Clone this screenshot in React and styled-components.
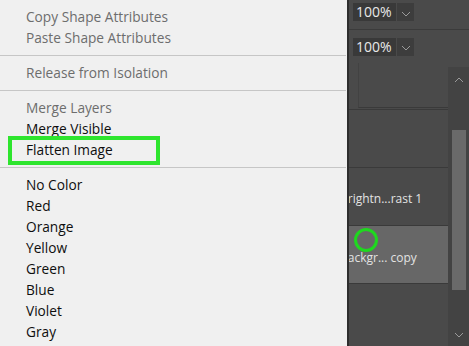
import React from "react";
import styled, { createGlobalStyle } from "styled-components";

const Global = createGlobalStyle`
  html, body { margin: 0; padding: 0; background: #4a4a4a; }
  body { font-family: "Open Sans", "Noto Sans", sans-serif; }
`;

const Screen = styled.div`
  position: relative;
  width: 469px;
  height: 346px;
  overflow: hidden;
  background: #4a4a4a;
`;

/* ---------- dark layers panel ---------- */
const Panel = styled.div`
  display: flex;
  flex-direction: column;
  height: 100%;
  font-family: "Open Sans", "Noto Sans", sans-serif;
  color: #e6e6e6;
`;

const OptionRow = styled.div`
  display: flex;
  height: ${(p) => p.$h}px;
  padding-top: ${(p) => p.$pt || 0}px;
  box-sizing: border-box;
  border-bottom: ${(p) => (p.$line ? "1px solid #3b3b3b" : "none")};
  align-items: ${(p) => (p.$pt ? "flex-start" : "center")};
`;

const OptLabel = styled.span`
  flex: 0 0 353px;
  text-align: right;
  padding-right: 8px;
  box-sizing: border-box;
  font-size: 12px;
`;

const ValueBox = styled.div`
  width: 43px;
  height: 18px;
  background: #393939;
  font-size: 14px;
  line-height: 18px;
  padding-left: 3px;
  box-sizing: border-box;
  color: #e8e8e8;
`;

const DropBtn = styled.div`
  width: 17px;
  height: 18px;
  margin-left: 1px;
  background: #3d3d3d;
  display: flex;
  align-items: center;
  justify-content: center;
  padding-top: 3px;
  box-sizing: border-box;
`;

const LayerArea = styled.div`
  flex: 1;
  display: flex;
  min-height: 0;
`;

const LayerList = styled.div`
  flex: 1;
  display: flex;
  flex-direction: column;
`;

const TopGap = styled.div`
  height: 45px;
  border-bottom: 1px solid #3a3a3a;
  box-sizing: border-box;
  margin-bottom: 1px;
  margin-left: 358px;
  border-left: 1px solid #424242;
`;

const LayerRow = styled.div`
  height: ${(p) => p.$h || 58}px;
  box-sizing: border-box;
  border-top: 1px solid #3a3a3a;
  background: ${(p) => (p.$selected ? "#676767" : "#4a4a4a")};
  display: flex;
  align-items: center;
  padding-left: 340px;
  padding-top: ${(p) => p.$shift || 0}px;
  font-size: 12px;
  color: #e2e2e2;
  white-space: nowrap;
`;

const Scrollbar = styled.div`
  width: 21px;
  margin-top: 4px;
  background: #434343;
  display: flex;
  flex-direction: column;
  align-items: center;
  justify-content: space-between;
  padding: 10px 0 8px;
  box-sizing: border-box;
`;

const Thumb = styled.div`
  width: 14px;
  height: 160px;
  background: #6a6a6a;
  margin-left: 1px;
`;

const ScrollTrack = styled.div`
  flex: 1;
  display: flex;
  flex-direction: column;
  align-items: center;
  padding-top: 47px;
`;

const Chevron = ({ up }) => (
  <svg width="10" height="6" viewBox="0 0 10 6">
    <path
      d={up ? "M1 5 L5 1 L9 5" : "M1 1 L5 5 L9 1"}
      fill="none"
      stroke="#9a9a9a"
      strokeWidth="1"
    />
  </svg>
);

/* ---------- light context menu ---------- */
const Menu = styled.div`
  position: absolute;
  left: 0;
  top: 0;
  width: 347px;
  height: 346px;
  background: #f0f0f0;
  border-right: 2px solid #2e2e2e;
  padding-top: 6px;
  box-sizing: content-box;
  font-family: "Open Sans", "Noto Sans", sans-serif;
`;

const Item = styled.div`
  position: relative;
  height: 21px;
  line-height: 21px;
  padding-left: 26px;
  font-size: 13.7px;
  color: ${(p) => (p.$disabled ? "#6d6d6d" : "#0e0e0e")};
  white-space: nowrap;

  ${(p) =>
    p.$highlight &&
    `
    &::after {
      content: "";
      position: absolute;
      left: 8px;
      top: -3px;
      width: 152px;
      height: 29px;
      box-sizing: border-box;
      border: 4px solid #2ee52e;
    }
  `}
`;

const Separator = styled.div`
  height: 14px;
  display: flex;
  align-items: center;
  &::before {
    content: "";
    display: block;
    width: 346px;
    height: 1px;
    background: #c6c6c6;
  }
`;

const Marker = styled.div`
  position: absolute;
  left: 354px;
  top: 228px;
  width: 24px;
  height: 24px;
  border-radius: 50%;
  border: 3px solid #1fd81f;
  box-sizing: border-box;
`;

const menu = [
  { t: "Copy Shape Attributes", d: true },
  { t: "Paste Shape Attributes", d: true },
  "sep",
  { t: "Release from Isolation", d: true },
  "sep",
  { t: "Merge Layers", d: true },
  { t: "Merge Visible" },
  { t: "Flatten Image", h: true },
  "sep",
  { t: "No Color" },
  { t: "Red" },
  { t: "Orange" },
  { t: "Yellow" },
  { t: "Green" },
  { t: "Blue" },
  { t: "Violet" },
  { t: "Gray" },
];

export default function App() {
  return (
    <Screen>
      <Global />
      <Panel>
        <OptionRow $h={30} $pt={3} $line>
          <OptLabel>Opacity:</OptLabel>
          <ValueBox>100%</ValueBox>
          <DropBtn>
            <Chevron />
          </DropBtn>
        </OptionRow>
        <OptionRow $h={33}>
          <OptLabel>Fill:</OptLabel>
          <ValueBox>100%</ValueBox>
          <DropBtn>
            <Chevron />
          </DropBtn>
        </OptionRow>
        <LayerArea>
          <LayerList>
            <TopGap />
            <LayerRow />
            <LayerRow $shift={4}>Brightn...rast 1</LayerRow>
            <LayerRow $selected $shift={6}>
              Backgr... copy
            </LayerRow>
            <LayerRow />
          </LayerList>
          <Scrollbar>
            <Chevron up />
            <ScrollTrack>
              <Thumb />
            </ScrollTrack>
            <Chevron />
          </Scrollbar>
        </LayerArea>
      </Panel>

      <Menu>
        {menu.map((m, i) =>
          m === "sep" ? (
            <Separator key={i} />
          ) : (
            <Item key={i} $disabled={m.d} $highlight={m.h}>
              {m.t}
            </Item>
          )
        )}
      </Menu>
      <Marker />
    </Screen>
  );
}
